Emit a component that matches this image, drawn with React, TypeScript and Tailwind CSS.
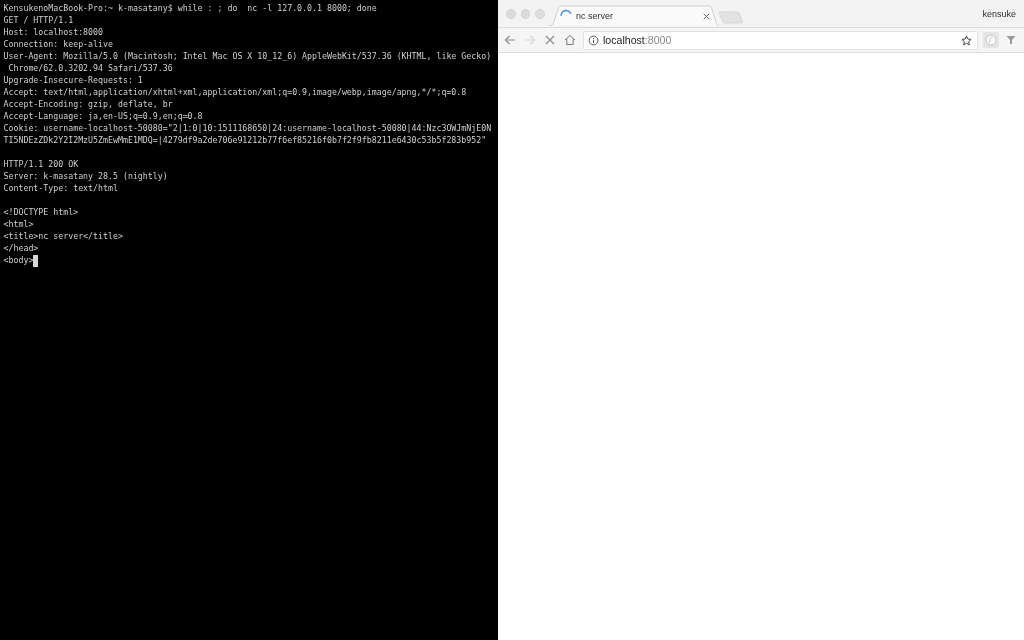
import React from "react";

const lines = [
  "KensukenoMacBook-Pro:~ k-masatany$ while : ; do  nc -l 127.0.0.1 8000; done",
  "GET / HTTP/1.1",
  "Host: localhost:8000",
  "Connection: keep-alive",
  "User-Agent: Mozilla/5.0 (Macintosh; Intel Mac OS X 10_12_6) AppleWebKit/537.36 (KHTML, like Gecko)",
  " Chrome/62.0.3202.94 Safari/537.36",
  "Upgrade-Insecure-Requests: 1",
  "Accept: text/html,application/xhtml+xml,application/xml;q=0.9,image/webp,image/apng,*/*;q=0.8",
  "Accept-Encoding: gzip, deflate, br",
  "Accept-Language: ja,en-US;q=0.9,en;q=0.8",
  "Cookie: username-localhost-50080=\"2|1:0|10:1511168650|24:username-localhost-50080|44:Nzc3OWJmNjE0N",
  "TI5NDEzZDk2Y2I2MzU5ZmEwMmE1MDQ=|4279df9a2de706e91212b77f6ef85216f0b7f2f9fb8211e6430c53b5f283b952\"",
  "",
  "HTTP/1.1 200 OK",
  "Server: k-masatany 28.5 (nightly)",
  "Content-Type: text/html",
  "",
  "<!DOCTYPE html>",
  "<html>",
  "<title>nc server</title>",
  "</head>",
];

function Terminal() {
  return (
    <div className="w-[498px] h-full shrink-0 bg-black pt-[1.5px] pl-[3.5px] overflow-hidden font-['DejaVu_Sans_Mono',monospace] text-[8.27px] leading-[12.05px] text-[#d0d0d0] whitespace-pre blur-[0.35px]">
      {lines.map((l, i) => (
        <div key={i} className="h-[12.05px]">{l}</div>
      ))}
      <div className="h-[12.05px] flex items-center">
        <span>{"<body>"}</span>
        <span className="w-[5px] h-[12px] bg-[#d8d8d8]" />
      </div>
    </div>
  );
}

function TrafficLight() {
  return <span className="w-[9.5px] h-[9.5px] rounded-full bg-[#dcdcdc] border border-[#d4d4d4]" />;
}

function TabBar() {
  return (
    <div className="relative h-[27px] shrink-0 bg-[#f3f3f3] flex blur-[0.25px]">
      <div className="flex gap-[5px] pl-[8px] pt-[9px] h-fit w-[52px]">
        <TrafficLight />
        <TrafficLight />
        <TrafficLight />
      </div>
      <div className="relative w-[170px] h-[27px] ml-[-1px]">
        <svg className="absolute inset-0" width="170" height="27" viewBox="0 0 170 27">
          <path d="M0 25.5 H1.5 C3 25.5 3.8 24.8 4.3 23.5 L9.5 8 C10 6.7 10.8 6 12 6 H160 C161.2 6 162 6.7 162.5 8 L167.5 23.5 C168 24.8 169 25.5 170 25.5" fill="#fafafa" stroke="#cfcfcf" strokeWidth="1" />
        </svg>
        <svg className="absolute left-[11px] top-[9px]" width="12" height="12" viewBox="0 0 12 12" fill="none">
          <path d="M1 6.5 C1.5 3.5 3.5 1.5 6.2 1.5 C8.2 1.5 9.8 2.6 10.8 4.2" stroke="#4a8ad8" strokeWidth="1.4" strokeLinecap="round" />
        </svg>
        <span className="absolute left-[27px] top-[10px] font-['Liberation_Sans',sans-serif] text-[9px] leading-[12px] text-[#303030]">nc server</span>
        <svg className="absolute left-[154px] top-[13px]" width="7" height="7" viewBox="0 0 7 7" stroke="#666" strokeWidth="1" strokeLinecap="round">
          <path d="M1 1 L6 6 M6 1 L1 6" />
        </svg>
      </div>
      <svg width="26" height="27" viewBox="0 0 26 27" className="shrink-0">
        <path d="M1 12 H18 C19 12 19.6 12.4 20 13.3 L23.5 21.5 C23.9 22.5 23.4 23 22.5 23 H6 C5 23 4.5 22.6 4.2 21.8 L0.4 13.3 C0.1 12.5 0.3 12 1 12 Z" fill="#e2e2e2" stroke="#d4d4d4" />
      </svg>
      <span className="ml-auto mr-[8px] mt-[8px] h-fit font-['Liberation_Sans',sans-serif] text-[9px] leading-[12px] text-[#303030]">kensuke</span>
    </div>
  );
}

function Toolbar() {
  return (
    <div className="h-[26px] shrink-0 bg-[#f5f5f5] border-t border-[#dcdcdc] border-b flex items-center pl-[6px] pr-[8px] blur-[0.25px]">
      <svg width="12" height="12" viewBox="0 0 12 12" fill="none" stroke="#8c8c8c" strokeWidth="1.2" className="shrink-0">
        <path d="M11 6 H1.5 M5.5 2 L1.5 6 L5.5 10" />
      </svg>
      <svg width="12" height="12" viewBox="0 0 12 12" fill="none" stroke="#d4d4d4" strokeWidth="1.2" className="shrink-0 ml-[8px]">
        <path d="M1 6 H10.5 M6.5 2 L10.5 6 L6.5 10" />
      </svg>
      <svg width="12" height="12" viewBox="0 0 12 12" fill="none" stroke="#8a8a8a" strokeWidth="1.1" className="shrink-0 ml-[8px]">
        <path d="M2 2 L10 10 M10 2 L2 10" />
      </svg>
      <svg width="12" height="12" viewBox="0 0 12 12" fill="none" stroke="#7a7a7a" strokeWidth="1" className="shrink-0 ml-[8px]">
        <path d="M1 6 L6 1.5 L11 6 M2.8 5 V10.5 H9.2 V5" />
      </svg>
      <div className="ml-[7px] flex-1 h-[19px] bg-white rounded-[2px] border border-[#e2e2e2] flex items-center pl-[4px] pr-[5px]">
        <svg width="11" height="11" viewBox="0 0 11 11" fill="none" stroke="#444" strokeWidth="0.9" className="shrink-0">
          <circle cx="5.5" cy="5.5" r="4.4" />
          <path d="M5.5 4.9 V8 M5.5 3 V3.9" />
        </svg>
        <span className="ml-[4px] font-['Liberation_Sans',sans-serif] text-[10.6px] leading-[14px] text-[#222]">
          localhost<span className="text-[#8a8a8a]">:8000</span>
        </span>
        <svg width="11" height="11" viewBox="0 0 12 12" fill="none" stroke="#333" strokeWidth="1" className="shrink-0 ml-auto">
          <path d="M6 1 L7.5 4.4 L11 4.8 L8.4 7.1 L9.1 10.7 L6 8.9 L2.9 10.7 L3.6 7.1 L1 4.8 L4.5 4.4 Z" />
        </svg>
      </div>
      <div className="ml-[5px] w-[16px] h-[16px] bg-[#e4e4e4] rounded-[2px] flex items-center justify-center shrink-0">
        <svg width="12" height="12" viewBox="0 0 12 12" fill="#fafafa" stroke="#bdbdbd" strokeWidth="0.8">
          <circle cx="6" cy="6" r="5" />
          <path d="M7.5 3.2 C6 3 5 4 4.8 6 C4.6 7.6 4.8 9 4 9" fill="none" />
        </svg>
      </div>
      <svg width="10" height="10" viewBox="0 0 10 10" className="shrink-0 ml-[7px]">
        <path d="M0.5 1 H9.5 L6 5 V9 H4 V5 Z" fill="#9a9a9a" />
      </svg>
    </div>
  );
}

export default function App() {
  return (
    <div className="w-[1024px] h-[640px] flex overflow-hidden bg-white">
      <Terminal />
      <div className="flex-1 flex flex-col min-w-0">
        <TabBar />
        <Toolbar />
        <div className="flex-1 bg-white" />
      </div>
    </div>
  );
}
